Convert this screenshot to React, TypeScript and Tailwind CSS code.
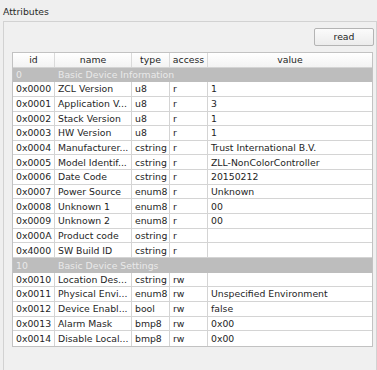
import React from "react";

type Row = { g?: boolean; id: string; name: string; type?: string; access?: string; value?: string };

const rows: Row[] = [
  { g: true, id: "0", name: "Basic Device Information" },
  { id: "0x0000", name: "ZCL Version", type: "u8", access: "r", value: "1" },
  { id: "0x0001", name: "Application V...", type: "u8", access: "r", value: "3" },
  { id: "0x0002", name: "Stack Version", type: "u8", access: "r", value: "1" },
  { id: "0x0003", name: "HW Version", type: "u8", access: "r", value: "1" },
  { id: "0x0004", name: "Manufacturer...", type: "cstring", access: "r", value: "Trust International B.V." },
  { id: "0x0005", name: "Model Identif...", type: "cstring", access: "r", value: "ZLL-NonColorController" },
  { id: "0x0006", name: "Date Code", type: "cstring", access: "r", value: "20150212" },
  { id: "0x0007", name: "Power Source", type: "enum8", access: "r", value: "Unknown" },
  { id: "0x0008", name: "Unknown 1", type: "enum8", access: "r", value: "00" },
  { id: "0x0009", name: "Unknown 2", type: "enum8", access: "r", value: "00" },
  { id: "0x000A", name: "Product code", type: "ostring", access: "r", value: "" },
  { id: "0x4000", name: "SW Build ID", type: "cstring", access: "r", value: "" },
  { g: true, id: "10", name: "Basic Device Settings" },
  { id: "0x0010", name: "Location Des...", type: "cstring", access: "rw", value: "" },
  { id: "0x0011", name: "Physical Envi...", type: "enum8", access: "rw", value: "Unspecified Environment" },
  { id: "0x0012", name: "Device Enabl...", type: "bool", access: "rw", value: "false" },
  { id: "0x0013", name: "Alarm Mask", type: "bmp8", access: "rw", value: "0x00" },
  { id: "0x0014", name: "Disable Local...", type: "bmp8", access: "rw", value: "0x00" },
];

const cols = "grid grid-cols-[42px_77px_38px_38px_1fr]";

export default function App() {
  return (
    <div
      className="w-[377px] h-[370px] overflow-hidden bg-[#efefef] text-[#1e1e1e] text-[9.3px]"
      style={{ fontFamily: '"DejaVu Sans", sans-serif' }}
    >
      <div className="pt-[6px] pl-[3px] leading-[11px] h-[21px] text-[#2a2a2a]">Attributes</div>
      <div className="ml-[3px] w-[374px] h-[360px] border-l border-t border-r border-[#d2d2d2] bg-[#f0f0f0] pt-[6px] pl-[8px] pr-[2px]">
        <div className="flex justify-end">
          <button className="w-[60px] h-[18px] rounded-[2px] border border-[#b4b4b4] bg-gradient-to-b from-[#fbfbfb] to-[#ececec] leading-[16px] text-[#1e1e1e]">
            read
          </button>
        </div>
        <div className="mt-[6px] w-[361px] border border-[#c2c2c2] bg-white">
          <div className={`${cols} h-[14.65px] bg-gradient-to-b from-[#ffffff] to-[#f3f3f3] border-b border-[#d4d4d4]`}>
            {["id", "name", "type", "access", "value"].map((h, i) => (
              <div
                key={h}
                className={`flex items-center justify-center leading-none ${i < 4 ? "border-r border-[#dadada]" : ""}`}
              >
                {h}
              </div>
            ))}
          </div>
          {rows.map((r, idx) =>
            r.g ? (
              <div key={idx} className={`${cols} h-[14.65px] bg-[#bdbdbd] text-[#e9e9e9]`}>
                <div className="flex items-center pl-[3px] leading-none">{r.id}</div>
                <div className="col-span-4 flex items-center pl-[3px] leading-none">{r.name}</div>
              </div>
            ) : (
              <div
                key={idx}
                className={`${cols} h-[14.65px] ${idx < rows.length - 1 ? "border-b border-[#d4d4d4]" : ""}`}
              >
                <div className="flex items-center pl-[3px] leading-none border-r border-[#d4d4d4] whitespace-nowrap overflow-hidden">{r.id}</div>
                <div className="flex items-center pl-[3px] leading-none border-r border-[#d4d4d4] whitespace-nowrap overflow-hidden">{r.name}</div>
                <div className="flex items-center pl-[3px] leading-none border-r border-[#d4d4d4] whitespace-nowrap overflow-hidden">{r.type}</div>
                <div className="flex items-center pl-[3px] leading-none border-r border-[#d4d4d4] whitespace-nowrap overflow-hidden">{r.access}</div>
                <div className="flex items-center pl-[3px] leading-none whitespace-nowrap overflow-hidden">{r.value}</div>
              </div>
            )
          )}
        </div>
      </div>
    </div>
  );
}
